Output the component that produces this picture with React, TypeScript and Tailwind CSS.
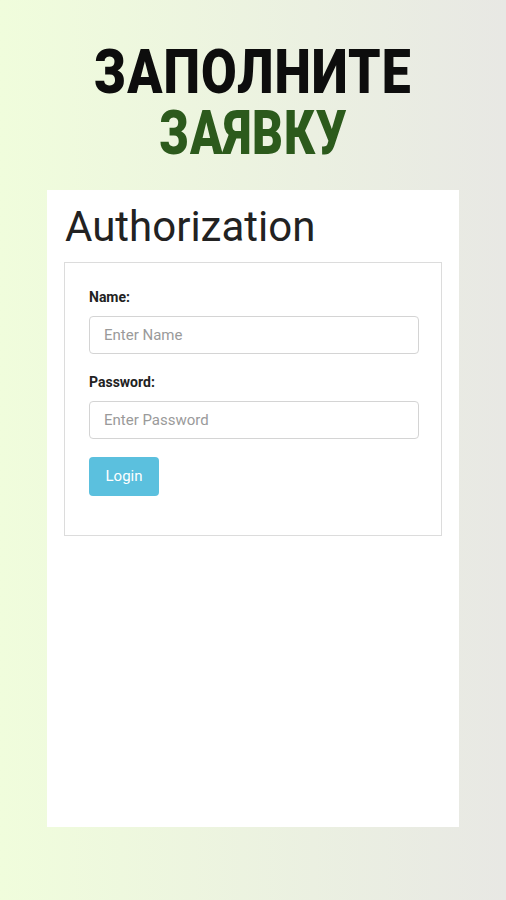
export default function App() {
  return (
    <div className="w-[506px] h-[900px] bg-gradient-to-r from-[#f0fddc] to-[#e8e8e4] flex flex-col items-center font-['Roboto',sans-serif]">
      {/* Заголовок */}
      <div className="pt-[43px] flex flex-col items-center font-black uppercase">
        <div className="text-[51px] leading-[60px] text-[#0d0d0d] tracking-[1px] scale-x-[1.015] scale-y-[1.18]">Заполните</div>
        <div className="text-[51px] leading-[60px] text-[#2c5a1c] tracking-[1px] scale-x-[0.94] scale-y-[1.18] mt-[1px]">Заявку</div>
      </div>

      {/* Карточка */}
      <div className="mt-[26px] w-[412px] h-[637px] bg-white px-[17px] pt-[14px]">
        <h1 className="text-[42px] leading-[46px] text-[#222] ml-[1px]">Authorization</h1>
        <div className="mt-[12px] border border-[#dcdcdc] h-[274px] px-[24px] pt-[25px]">
          <label className="block text-[14px] font-bold text-[#222] leading-[18px]">Name:</label>
          <input
            className="mt-[10px] w-[330px] h-[38px] border border-[#d4d4d4] rounded-[4px] px-[14px] text-[15px] placeholder:text-[#9a9a9a] outline-none"
            placeholder="Enter Name"
          />
          <label className="block mt-[19px] text-[14px] font-bold text-[#222] leading-[18px]">Password:</label>
          <input
            type="password"
            className="mt-[10px] w-[330px] h-[38px] border border-[#d4d4d4] rounded-[4px] px-[14px] text-[15px] placeholder:text-[#9a9a9a] outline-none"
            placeholder="Enter Password"
          />
          <button className="block mt-[18px] w-[70px] h-[39px] bg-[#5bc0de] text-white text-[15px] rounded-[4px]">Login</button>
        </div>
      </div>
    </div>
  );
}
